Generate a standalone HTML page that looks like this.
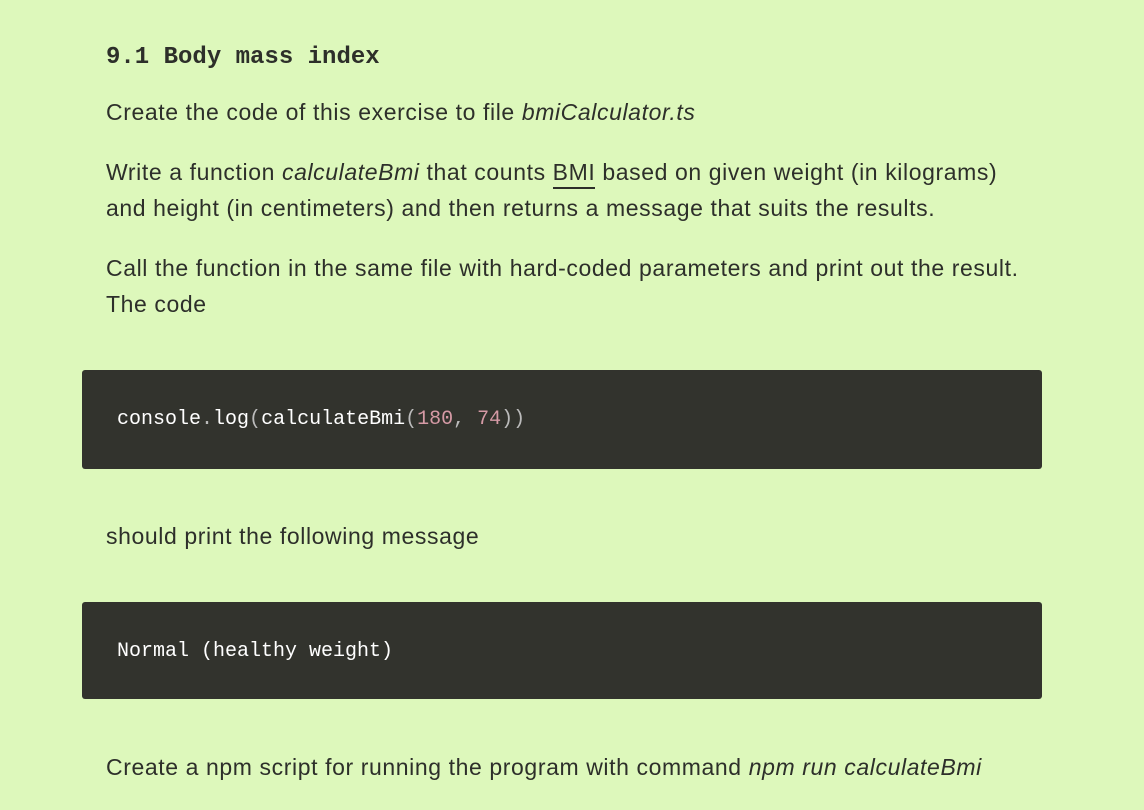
<!DOCTYPE html>
<html><head><meta charset="utf-8"><style>
html,body{margin:0;padding:0;background:#ddf8bb;width:1144px;height:810px;overflow:hidden}
body{font-family:"Liberation Sans",Arial,sans-serif;color:#2d2f2a;font-size:23px;letter-spacing:0.6px;position:relative}
.t{position:absolute;left:106px;white-space:nowrap;line-height:36px}
h3{position:absolute;left:106px;top:40px;margin:0;font:bold 24px/36px "Liberation Mono",monospace;color:#2d2f2a;letter-spacing:0}
.code{position:absolute;left:82px;width:960px;background:#32332d;border-radius:3px}
.code span.c{position:absolute;left:35px;font:20px/30px "Liberation Mono","DejaVu Sans Mono",monospace;letter-spacing:0;color:#fff;white-space:pre}
.g{color:#bbb}.n{color:#d59aa5}
abbr{text-decoration:none;border-bottom:2px solid #2d2f2a;padding-bottom:2px}
</style></head><body>
<h3>9.1 Body mass index</h3>
<div class="t" style="top:94px">Create the code of this exercise to file <i>bmiCalculator.ts</i></div>
<div class="t" style="top:154px">Write a function <i>calculateBmi</i> that counts <abbr>BMI</abbr> based on given weight (in kilograms)</div>
<div class="t" style="top:190px">and height (in centimeters) and then returns a message that suits the results.</div>
<div class="t" style="top:250px">Call the function in the same file with hard-coded parameters and print out the result.</div>
<div class="t" style="top:286px">The code</div>
<div class="code" style="top:370px;height:99px"><span class="c" style="top:35px">console<span class="g">.</span>log<span class="g">(</span>calculateBmi<span class="g">(</span><span class="n">180</span><span class="g">,</span> <span class="n">74</span><span class="g">))</span></span></div>
<div class="t" style="top:518px">should print the following message</div>
<div class="code" style="top:602px;height:97px"><span class="c" style="top:35px">Normal (healthy weight)</span></div>
<div class="t" style="top:749px">Create a npm script for running the program with command <i>npm run calculateBmi</i></div>
</body></html>
